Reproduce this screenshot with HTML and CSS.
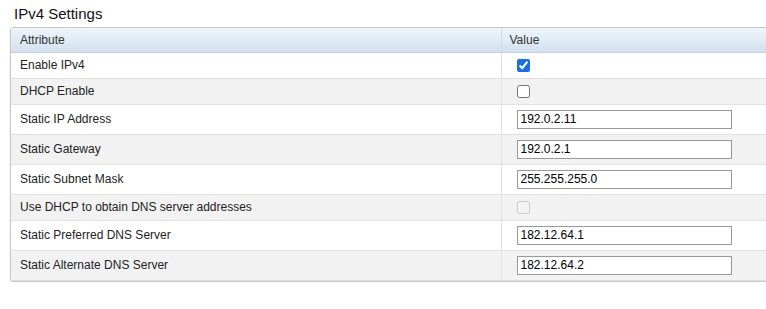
FILE: index.html
```html
<!DOCTYPE html>
<html lang="en">
<head>
    <meta charset="UTF-8">
    <title>IPv4 Settings</title>
    <link rel="stylesheet" href="styles.css">
</head>
<body>

<h2 class="title">IPv4 Settings</h2>

<div class="panel">
    <table class="grid">
        <thead>
            <tr>
                <th class="attr">Attribute</th>
                <th class="val">Value</th>
            </tr>
        </thead>
        <tbody>
            <tr class="short">
                <td>Enable IPv4</td>
                <td class="field"><input type="checkbox" checked></td>
            </tr>
            <tr class="short alt">
                <td>DHCP Enable</td>
                <td class="field"><input type="checkbox"></td>
            </tr>
            <tr>
                <td>Static IP Address</td>
                <td class="field"><input type="text" value="192.0.2.11"></td>
            </tr>
            <tr class="alt">
                <td>Static Gateway</td>
                <td class="field"><input type="text" value="192.0.2.1"></td>
            </tr>
            <tr>
                <td>Static Subnet Mask</td>
                <td class="field"><input type="text" value="255.255.255.0"></td>
            </tr>
            <tr class="short alt">
                <td>Use DHCP to obtain DNS server addresses</td>
                <td class="field"><input type="checkbox" disabled></td>
            </tr>
            <tr>
                <td>Static Preferred DNS Server</td>
                <td class="field"><input type="text" value="182.12.64.1"></td>
            </tr>
            <tr class="alt">
                <td>Static Alternate DNS Server</td>
                <td class="field"><input type="text" value="182.12.64.2"></td>
            </tr>
        </tbody>
    </table>
</div>

</body>
</html>
```

FILE: styles.css
```css
* {
    box-sizing: border-box;
}
body {
    font-family: Arial, "Liberation Sans", sans-serif;
    margin: 0;
    padding: 0;
    overflow: hidden;
    color: #222;
    background: #fff;
}
.title {
    font-size: 15px;
    font-weight: normal;
    margin: 0;
    padding: 5px 0 0 14px;
    height: 27px;
    color: #111;
}
.panel {
    margin-left: 10px;
    width: 790px;
    border: 1px solid #c8c8c8;
    border-radius: 3px;
    box-shadow: 0 2px 2px rgba(0, 0, 0, 0.12);
    overflow: hidden;
}
.grid {
    width: 100%;
    border-collapse: collapse;
    font-size: 12px;
}
.grid th {
    height: 24px;
    text-align: left;
    font-weight: normal;
    padding: 0 9px;
    color: #333;
    background: linear-gradient(#eef5fc, #d2e1ee);
    border-bottom: 1px solid #c5d2de;
}
.grid th.attr {
    width: 490px;
}
.grid th.val {
    padding-left: 8px;
    border-left: 1px solid #d0dae3;
}
.grid td {
    height: 30px;
    padding: 0 9px;
    border-bottom: 1px solid #e2e2e2;
    color: #222;
}
.grid tr.short td {
    height: 26px;
}
.grid tr.alt td {
    background: #f2f2f2;
}
.grid td.field {
    padding-left: 15px;
    border-left: 1px solid #e2e2e2;
}
.grid tbody tr:last-child td {
    border-bottom: 1px solid #dcdcdc;
}
.field input[type="checkbox"] {
    width: 13px;
    height: 13px;
    margin: 0;
    vertical-align: middle;
    accent-color: #1a6fdc;
}
.field input[type="text"] {
    width: 215px;
    height: 19px;
    margin: 0;
    padding: 0 3px;
    border: 1px solid #999;
    font-family: Arial, "Liberation Sans", sans-serif;
    font-size: 12px;
    color: #000;
    background: #fff;
    vertical-align: middle;
}
```
